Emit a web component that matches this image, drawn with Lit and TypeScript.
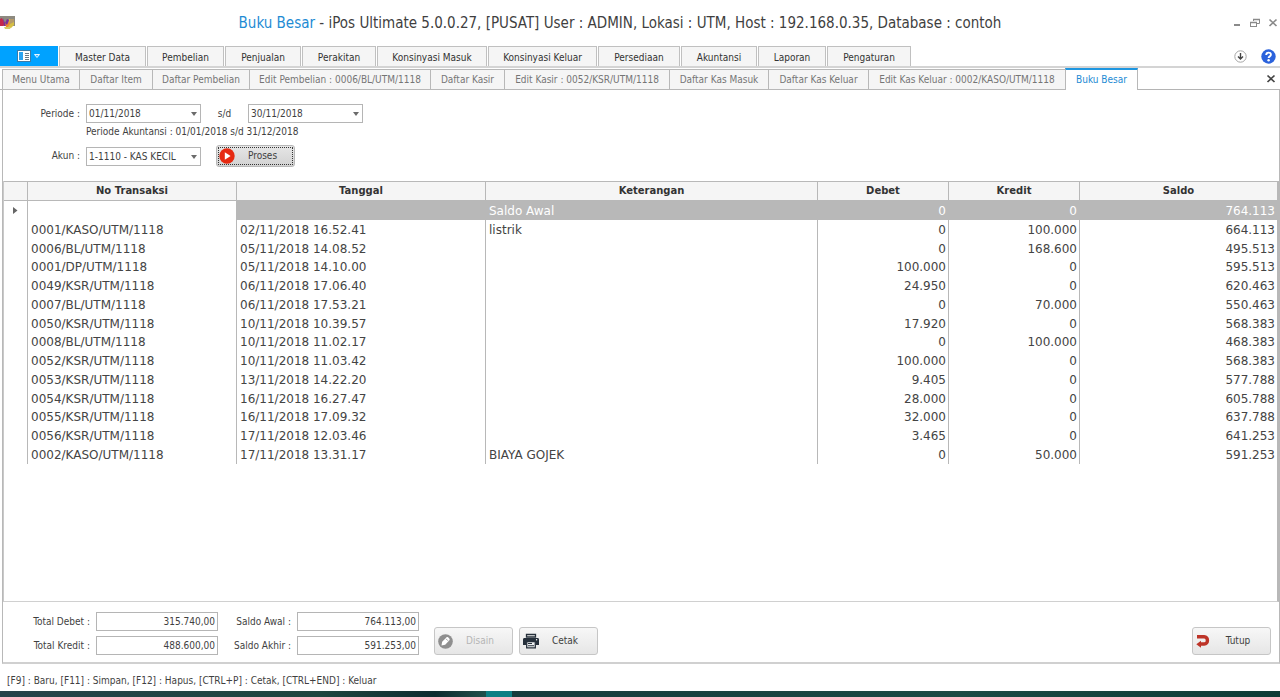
import { LitElement, html, css, svg } from "lit";
import { customElement, state } from "lit/decorators.js";

interface Entry {
  no: string;
  date: string;
  note: string;
  debit: string;
  credit: string;
  balance: string;
}

const row = (no: string, date: string, note: string, debit: string, credit: string, balance: string): Entry => ({
  no, date, note, debit, credit, balance,
});

const ENTRIES: Entry[] = [
  row("", "", "Saldo Awal", "0", "0", "764.113"),
  row("0001/KASO/UTM/1118", "02/11/2018 16.52.41", "listrik", "0", "100.000", "664.113"),
  row("0006/BL/UTM/1118", "05/11/2018 14.08.52", "", "0", "168.600", "495.513"),
  row("0001/DP/UTM/1118", "05/11/2018 14.10.00", "", "100.000", "0", "595.513"),
  row("0049/KSR/UTM/1118", "06/11/2018 17.06.40", "", "24.950", "0", "620.463"),
  row("0007/BL/UTM/1118", "06/11/2018 17.53.21", "", "0", "70.000", "550.463"),
  row("0050/KSR/UTM/1118", "10/11/2018 10.39.57", "", "17.920", "0", "568.383"),
  row("0008/BL/UTM/1118", "10/11/2018 11.02.17", "", "0", "100.000", "468.383"),
  row("0052/KSR/UTM/1118", "10/11/2018 11.03.42", "", "100.000", "0", "568.383"),
  row("0053/KSR/UTM/1118", "13/11/2018 14.22.20", "", "9.405", "0", "577.788"),
  row("0054/KSR/UTM/1118", "16/11/2018 16.27.47", "", "28.000", "0", "605.788"),
  row("0055/KSR/UTM/1118", "16/11/2018 17.09.32", "", "32.000", "0", "637.788"),
  row("0056/KSR/UTM/1118", "17/11/2018 12.03.46", "", "3.465", "0", "641.253"),
  row("0002/KASO/UTM/1118", "17/11/2018 13.31.17", "BIAYA GOJEK", "0", "50.000", "591.253"),
];

const MENUS = [
  "Master Data", "Pembelian", "Penjualan", "Perakitan", "Konsinyasi Masuk",
  "Konsinyasi Keluar", "Persediaan", "Akuntansi", "Laporan", "Pengaturan",
];

const DOCUMENTS = [
  "Menu Utama", "Daftar Item", "Daftar Pembelian", "Edit Pembelian : 0006/BL/UTM/1118",
  "Daftar Kasir", "Edit Kasir : 0052/KSR/UTM/1118", "Daftar Kas Masuk", "Daftar Kas Keluar",
  "Edit Kas Keluar : 0002/KASO/UTM/1118", "Buku Besar",
];

const appIcon = svg`<svg width="15" height="14" viewBox="0 0 15 14">
  <rect width="15" height="10" fill="#8d8a80"/>
  <path d="M0 3l2-1 3 6-2 2H0z" fill="#c4264c"/>
  <path d="M3 2l2 5 2-4 2 1-2 6H4z" fill="#7b2f96"/>
  <path d="M5 7l2 2 3-6 1 2-2 6H6z" fill="#ef8a2b"/>
  <path d="M9 3h5v6l-3 3H7l3-4z" fill="#d6bf45"/>
  <path d="M10 3h4v3l-4 2z" fill="#b59a6a"/>
  <path d="M4 11h7l-1 2H5z" fill="#d3cf63"/>
</svg>`;

const panelIcon = svg`<svg width="24" height="12" viewBox="0 0 24 12">
  <rect x=".5" y=".5" width="13" height="11" fill="#fff" stroke="#3d7ba6"/>
  <rect x="1.500" y="1.500" width="5" height="9" fill="#2ba4f0" stroke="#fff"/>
  <path d="M8 3.500h4M8 5.500h4M8 7.500h4M8 9.500h4" stroke="#5a6a75" stroke-width=".9"/>
  <path d="M17.500 4.500h5L20 7.500z" fill="#3fb6ff" stroke="#e8f6ff"/>
</svg>`;

const minimiseIcon = svg`<svg width="10" height="10" viewBox="0 0 10 10"><path d="M2 7h6" stroke="#8a8a8a" stroke-width="2"/></svg>`;
const restoreIcon = svg`<svg width="10" height="10" viewBox="0 0 10 10" fill="none" stroke="#8a8a8a">
  <path d="M3.500 3V1.500h6v4H7"/><path d="M3 1.500h7" stroke-width="1.500"/><rect x=".5" y="4.500" width="6" height="4"/><path d="M0 4.500h7" stroke-width="1.500"/></svg>`;
const closeIcon = (color: string) => svg`<svg width="10" height="10" viewBox="0 0 10 10"><path d="M1.500 1.500l7 6.500M8.500 1.500l-7 6.500" stroke=${color} stroke-width="1.700"/></svg>`;
const downIcon = svg`<svg width="13" height="13" viewBox="0 0 13 13" fill="none"><circle cx="6.500" cy="6.500" r="5.700" stroke="#a5a5a5"/><path d="M6.500 3v6M4 6.500L6.500 9 9 6.500" stroke="#444" stroke-width="1.400"/></svg>`;
const helpIcon = svg`<svg width="15" height="15" viewBox="0 0 15 15" fill="none"><circle cx="7.500" cy="7.500" r="7.200" fill="#2b62dc"/><path d="M5.200 6c0-3.200 4.700-3.100 4.700-.3 0 1.700-2.300 1.600-2.300 3.300" stroke="#fff" stroke-width="1.900"/><circle cx="7.600" cy="11.200" r="1.200" fill="#fff"/></svg>`;
const caretIcon = svg`<svg class="caret" width="6" height="4" viewBox="0 0 6 4"><path d="M0 0h6L3 4z" fill="#6b6b6b"/></svg>`;
const playIcon = svg`<svg width="16" height="16" viewBox="0 0 16 16"><circle cx="8" cy="8" r="7.700" fill="#e62a12"/><path d="M5.800 4.300v7.400L11.600 8z" fill="#fff"/></svg>`;
const pencilIcon = svg`<svg width="15" height="15" viewBox="0 0 15 15"><circle cx="7.500" cy="7.500" r="7.300" fill="#8f8f8f"/><path d="M3.500 11.600l.7-3.800 4.600-4.700c.8-.7 3.500 1.900 2.800 2.800L7.200 10.700z" fill="#fff"/><path d="M8 4.800l2 2" stroke="#8f8f8f" stroke-width=".8"/></svg>`;
const printerIcon = svg`<svg width="16" height="16" viewBox="0 0 16 16"><path d="M3.500 1.500h9V4h-9z" fill="#f4f4f4" stroke="#26303b" stroke-width="1.300"/><path d="M1.500 5h13c1 0 1.500.6 1.500 1.500V12h-3V9H3v3H0V6.500C0 5.600.5 5 1.500 5z" fill="#26303b"/><path d="M3.700 8.700h8.600v6.100H3.700z" fill="#eef0f2" stroke="#26303b" stroke-width="1.300"/><path d="M5 10.500h4M5 12.700h6" stroke="#26303b" stroke-width="1.100"/><circle cx="13.600" cy="6.800" r=".7" fill="#fff"/></svg>`;
const returnIcon = svg`<svg width="14" height="14" viewBox="0 0 14 14"><path d="M1 2.800h7.200c4.300 0 4.300 7.200 0 7.200H4" fill="none" stroke="#bd3428" stroke-width="3.400"/><path d="M5 6.700v7L.3 10.200z" fill="#bd3428"/></svg>`;

@customElement("app-root")
export class AppRoot extends LitElement {
  @state() private selected = 0;

  static styles = css`
    :host {
      display: flex;
      flex-direction: column;
      min-height: 100vh;
      box-sizing: border-box;
      background: #fff;
      color: #3f3f3f;
      font: 10px/14px "DejaVu Sans Condensed", "Noto Sans", sans-serif;
    }
    * { box-sizing: border-box; }
    svg { display: block; flex: none; }
    button, input, select { font: inherit; color: inherit; margin: 0; border-radius: 0; }
    button { padding: 0; border: 0; background: none; }

    .titlebar { display: grid; grid-template-columns: 40px 1fr 80px; align-items: center; height: 46px; }
    .title { margin: 0; font-size: 15px; line-height: 20px; font-weight: normal; text-align: center; white-space: nowrap; }
    .title-doc { color: #1e8bd4; }
    .window-buttons { display: flex; justify-content: flex-end; gap: 8px; padding-right: 2px; }

    .menubar { display: flex; justify-content: space-between; height: 22px; border-bottom: 2px solid #d4d4d4; }
    .menus { display: grid; grid-template-columns: 58px 87px 77px 76px 74px 110px 109px 82px 76px 68px 84px; column-gap: 1px; height: 20px; }
    .menu { padding-top: 2px; border: 1px solid #c0c0c0; border-bottom: 0; background: #f5f5f5; white-space: nowrap; color: #333; }
    .menu-main { display: flex; align-items: center; justify-content: center; background: #00a2ff; }
    .menu-tools { display: flex; align-items: center; gap: 14px; padding-right: 4px; }

    .doctabs { display: flex; justify-content: space-between; height: 22px; padding-left: 2px; border-bottom: 1px solid #b4b4b4; }
    .tabs { display: grid; grid-template-columns: 77px 73px 97px 181px 74px 165px 99px 100px 197px 73px; margin-bottom: -1px; }
    .tab { margin-top: 1px; border: 1px solid #b8b8b8; border-right: 0; background: #f5f5f5; color: #757575; white-space: nowrap; }
    .tab-active { margin-top: 0; border-top: 2px solid #1e96e0; border-right: 1px solid #b8b8b8; border-bottom: 0; background: #fff; color: #1e8bd4; }
    .doc-close { display: flex; align-items: center; padding-right: 4px; }

    .page { flex: 1; display: flex; flex-direction: column; margin-left: 2px; border: 1px solid #b8b8b8; border-top: 0; border-bottom: 2px solid #d0d0d0; }
    .filters { display: grid; grid-template-columns: 77px 115px 47px 115px; padding: 14px 0 14px 6px; }
    .label { text-align: right; white-space: nowrap; line-height: 19px; }
    .filters .label { padding-right: 6px; }
    .sd { text-align: center; line-height: 19px; }
    .combo { position: relative; height: 19px; }
    .combo select { appearance: none; display: block; width: 100%; height: 19px; padding: 0 14px 0 2px; border: 1px solid #b5b5b5; background: #fff; }
    .caret { position: absolute; right: 4px; top: 8px; pointer-events: none; }
    .hint { grid-column: 2 / 5; line-height: 16px; padding-top: 1px; margin-bottom: 5px; white-space: nowrap; }
    .filters .row-account { line-height: 22px; }
    .combo-account { margin-top: 2px; }

    .button { display: grid; grid-template-columns: 18px 1fr; align-items: center; height: 28px; width: 79px; padding: 0 8px 0 3px; border: 1px solid #c6c6c6; border-radius: 3px; background: linear-gradient(#f7f7f7, #e6e6e6); text-align: center; }
    .button:disabled { color: #b5b5b5; }
    .button-process { grid-column: 3 / 5; height: 22px; margin-left: 15px; background: linear-gradient(#e6e6e6, #d2d2d2); border-color: #b8b8b8; outline: 1px dotted #333; outline-offset: -3px; padding: 0 6px 0 2px; }

    .grid { flex: 1; border-right: 2px solid #b8b8b8; border-bottom: 1px solid #d0d0d0; border-left: 1px solid #c9c9c9; }
    .ledger { width: 100%; border-collapse: separate; border-spacing: 0; table-layout: fixed; font: 12px/18px "DejaVu Sans", sans-serif; color: #444; }
    .ledger th { height: 20px; padding: 0; font: bold 10px/18px "DejaVu Sans", sans-serif; color: #333; background: #f5f5f5; border: 1px solid #b8b8b8; border-left: 0; }
    .ledger td { height: 19px; padding: 0 2px 0 3px; border-right: 1px solid #b8b8b8; white-space: nowrap; line-height: 18px; }
    .ledger tbody tr:nth-child(4n) td { height: 18px; }
    .ledger th:last-child, .ledger td:last-child { border-right: 0; }
    .ledger .number { text-align: right; }
    .ledger .selected td { background: #b8b8b8; color: #fff; }
    .ledger .selected .mark, .ledger .selected .mark + td { background: #fff; }
    .col-mark { width: 24px; }
    .col-no { width: 209px; }
    .col-date { width: 249px; }
    .col-amount { width: 131px; }
    .col-balance { width: 197px; }
    .ledger .mark { padding-left: 9px; }

    .footer { display: flex; align-items: center; height: 60px; padding: 2px 8px 0 24px; }
    .totals { display: grid; grid-template-columns: 63px 122px 67px 122px; column-gap: 6px; row-gap: 5px; align-items: center; margin-right: 15px; }
    .total { width: 100%; height: 19px; border: 1px solid #b5b5b5; padding: 0 2px; text-align: right; background: #fff; }
    .actions { display: flex; flex: 1; gap: 6px; padding-top: 16px; }
    .action-close { margin-left: auto; }

    .status { height: 27px; padding-left: 7px; line-height: 34px; white-space: nowrap; }
    .desktop { height: 6px; background: linear-gradient(90deg, #25434a, #1e463f 25%, #0d2c30 34%, #22504c 38%, #0f7f84 38%, #0f7f84 40%, #163b3c 40%, #1b4a44 75%, #0e3b36); }
  `;

  render() {
    return html`
      <header class="titlebar">
        ${appIcon}
        <h1 class="title"><span class="title-doc">Buku Besar</span> - iPos Ultimate 5.0.0.27, [PUSAT] User : ADMIN, Lokasi : UTM, Host : 192.168.0.35, Database : contoh</h1>
        <div class="window-buttons">
          <button aria-label="Minimize">${minimiseIcon}</button>
          <button aria-label="Restore">${restoreIcon}</button>
          <button aria-label="Close">${closeIcon("#8a8a8a")}</button>
        </div>
      </header>
      <nav class="menubar">
        <div class="menus">
          <button class="menu-main" aria-label="Menu">${panelIcon}</button>
          ${MENUS.map((m) => html`<button class="menu">${m}</button>`)}
        </div>
        <div class="menu-tools">
          <button aria-label="Expand">${downIcon}</button>
          <button aria-label="Help">${helpIcon}</button>
        </div>
      </nav>
      <div class="doctabs">
        <div class="tabs" role="tablist">
          ${DOCUMENTS.map((d, i) => html`<button role="tab" class="tab ${i === DOCUMENTS.length - 1 ? "tab-active" : ""}">${d}</button>`)}
        </div>
        <button class="doc-close" aria-label="Close tab">${closeIcon("#444")}</button>
      </div>
      <main class="page">
        <div class="filters">
          <label class="label" for="from">Periode :</label>
          <div class="combo"><select id="from"><option>01/11/2018</option></select>${caretIcon}</div>
          <label class="sd" for="to">s/d</label>
          <div class="combo"><select id="to"><option>30/11/2018</option></select>${caretIcon}</div>
          <div class="hint">Periode Akuntansi : 01/01/2018 s/d 31/12/2018</div>
          <label class="label row-account" for="account">Akun :</label>
          <div class="combo combo-account"><select id="account"><option>1-1110 - KAS KECIL</option></select>${caretIcon}</div>
          <button class="button button-process">${playIcon}<span>Proses</span></button>
        </div>
        <div class="grid">
          <table class="ledger">
            <colgroup>
              <col class="col-mark"><col class="col-no"><col class="col-date"><col>
              <col class="col-amount"><col class="col-amount"><col class="col-balance">
            </colgroup>
            <thead>
              <tr><th></th><th>No Transaksi</th><th>Tanggal</th><th>Keterangan</th><th>Debet</th><th>Kredit</th><th>Saldo</th></tr>
            </thead>
            <tbody>
              ${ENTRIES.map((e, i) => html`
                <tr class=${i === this.selected ? "selected" : ""} @click=${() => (this.selected = i)}>
                  <td class="mark">${i === this.selected ? svg`<svg width="5" height="7" viewBox="0 0 5 7"><path d="M0 0l4.500 3.500L0 7z" fill="#666"/></svg>` : ""}</td>
                  <td>${e.no}</td>
                  <td>${e.date}</td>
                  <td>${e.note}</td>
                  <td class="number">${e.debit}</td>
                  <td class="number">${e.credit}</td>
                  <td class="number">${e.balance}</td>
                </tr>`)}
            </tbody>
          </table>
        </div>
        <div class="footer">
          <div class="totals">
            <label class="label" for="debit">Total Debet :</label><input class="total" id="debit" readonly value="315.740,00">
            <label class="label" for="opening">Saldo Awal :</label><input class="total" id="opening" readonly value="764.113,00">
            <label class="label" for="credit">Total Kredit :</label><input class="total" id="credit" readonly value="488.600,00">
            <label class="label" for="closing">Saldo Akhir :</label><input class="total" id="closing" readonly value="591.253,00">
          </div>
          <div class="actions">
            <button class="button" disabled>${pencilIcon}<span>Disain</span></button>
            <button class="button">${printerIcon}<span>Cetak</span></button>
            <button class="button action-close">${returnIcon}<span>Tutup</span></button>
          </div>
        </div>
      </main>
      <footer class="status">[F9] : Baru, [F11] : Simpan, [F12] : Hapus, [CTRL+P] : Cetak, [CTRL+END] : Keluar</footer>
      <div class="desktop"></div>
    `;
  }
}
